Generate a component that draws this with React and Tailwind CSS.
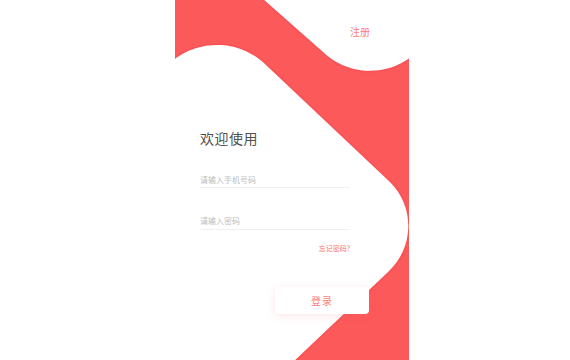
import React from "react";

const font = { fontFamily: '"Noto Sans CJK SC", "Noto Sans", sans-serif' };

function Background() {
  return (
    <svg
      className="absolute inset-0"
      width="234"
      height="360"
      viewBox="0 0 234 360"
      aria-hidden="true"
    >
      <defs>
        <filter id="edge" x="-10%" y="-10%" width="120%" height="120%">
          <feDropShadow dx="0" dy="0" stdDeviation="1.2" floodColor="#e8303a" floodOpacity="0.8" />
        </filter>
      </defs>
      <rect x="0" y="0" width="234" height="360" fill="#fc595b" />
      <g filter="url(#edge)" fill="#ffffff">
        <path d="M87,-2 L147,51 A68,68 0 0 0 236,57 L236,-2 Z" />
        <path d="M-2,362 L-2,60.5 A70,70 0 0 1 92.5,66.5 L215.1,182.2 A62,62 0 0 1 213.5,271.4 L118,362 Z" />
      </g>
    </svg>
  );
}

export default function App() {
  return (
    <div className="w-[570px] h-[360px] bg-white" style={font}>
      <div className="relative ml-[175px] w-[234px] h-[360px] overflow-hidden">
        <Background />
        <div className="relative flex flex-col pl-[25px]">
          <div className="flex justify-end pr-[39px] pt-[25px] text-[10px] leading-[14px]">
            <span className="text-[#fb7f80]">注册</span>
          </div>
          <h1 className="mt-[89px] text-[14px] leading-[20px] text-[#505050] font-normal tracking-[0.5px]">
            欢迎使用
          </h1>
          <div className="mt-[26px] w-[150px] pb-[1px] border-b border-[#efefef]">
            <input
              className="block w-full h-[12px] text-[8px] leading-[12px] bg-transparent outline-none placeholder:text-[#bdbdbd]"
              placeholder="请输入手机号码"
            />
          </div>
          <div className="mt-[27px] w-[150px] pb-[2px] border-b border-[#efefef]">
            <input
              type="password"
              className="block w-full h-[12px] text-[8px] leading-[12px] bg-transparent outline-none placeholder:text-[#bdbdbd]"
              placeholder="请输入密码"
            />
          </div>
          <div className="mt-[13px] w-[150px] text-right text-[7px] leading-[10px] text-[#fb7072]">
            忘记密码?
          </div>
          <button className="mt-[34px] ml-[75px] w-[94px] h-[27px] rounded-[4px] bg-white shadow-[0_2px_8px_rgba(252,89,91,0.15)] flex items-center justify-center text-[10px] leading-[14px]">
            <span className="text-[#fb7f80] tracking-[1px]">登录</span>
          </button>
        </div>
      </div>
    </div>
  );
}
